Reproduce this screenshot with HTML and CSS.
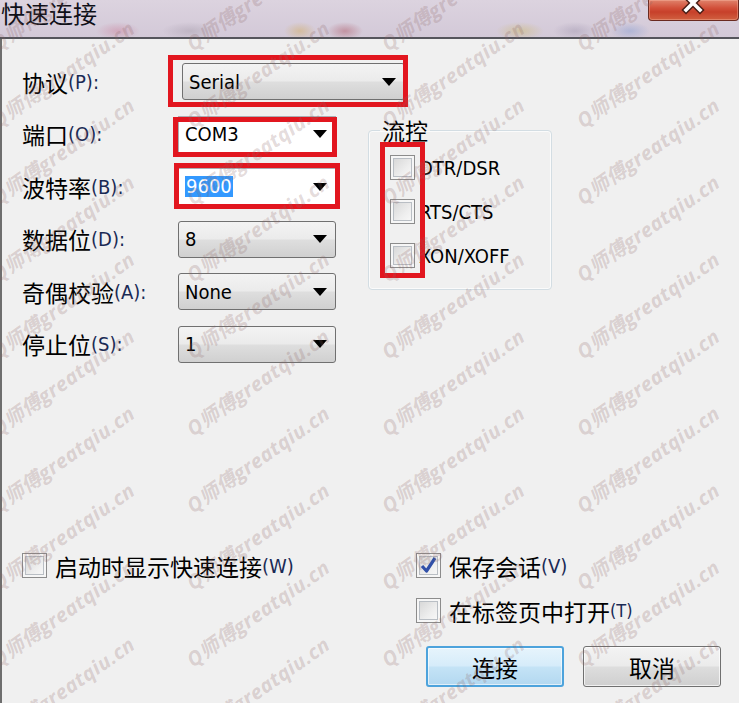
FILE: index.html
```html
<!DOCTYPE html>
<html lang="zh-CN">
<head>
<meta charset="utf-8">
<title>快速连接</title>
<link rel="stylesheet" href="styles.css">
</head>
<body>
<div class="window">
  <header class="titlebar">
    <span class="title">快速连接</span>
    <span class="close">
      <svg width="91" height="21" viewBox="0 0 91 21">
        <path d="M38 -3 L52 11 M52 -3 L38 11" stroke="#4a1e16" stroke-width="6.5" stroke-linecap="square" fill="none"/>
        <path d="M38 -3 L52 11 M52 -3 L38 11" stroke="#ffffff" stroke-width="3.6" stroke-linecap="square" fill="none"/>
      </svg>
    </span>
  </header>

  <main class="dialog">
    <div class="form">
      <div class="lbl"><span class="cj">协议</span><span class="acc">(P):</span></div>
      <div class="combo wide"><span>Serial</span><i class="arrow"></i><span class="mark m-proto"></span></div>

      <div class="lbl"><span class="cj">端口</span><span class="acc">(O):</span></div>
      <div class="combo edit"><span>COM3</span><i class="arrow"></i><span class="mark m-port"></span></div>

      <div class="lbl"><span class="cj">波特率</span><span class="acc">(B):</span></div>
      <div class="combo edit"><span class="sel">9600</span><i class="arrow"></i><span class="mark m-baud"></span></div>

      <div class="lbl"><span class="cj">数据位</span><span class="acc">(D):</span></div>
      <div class="combo"><span>8</span><i class="arrow"></i></div>

      <div class="lbl"><span class="cj">奇偶校验</span><span class="acc">(A):</span></div>
      <div class="combo"><span>None</span><i class="arrow"></i></div>

      <div class="lbl"><span class="cj">停止位</span><span class="acc">(S):</span></div>
      <div class="combo"><span>1</span><i class="arrow"></i></div>

      <fieldset class="flow">
        <legend class="cj">流控</legend>
        <div class="flow-list">
          <div class="opt tight"><span class="cb"></span><span>DTR/DSR</span></div>
          <div class="opt tight"><span class="cb"></span><span>RTS/CTS</span></div>
          <div class="opt tight"><span class="cb"></span><span>XON/XOFF</span></div>
          <span class="mark m-flow"></span>
        </div>
      </fieldset>
    </div>

    <div class="bottom">
      <div class="opt"><span class="cb"></span><span class="txt"><span class="cj">启动时显示快速连接</span><span class="acc">(W)</span></span></div>
      <div class="right">
        <div class="opt"><span class="cb checked"><svg width="23" height="23" viewBox="0 0 23 23"><path d="M5 12 L9.5 17 L18 4" stroke="#3050a8" stroke-width="3.2" fill="none" stroke-linejoin="round"/></svg></span><span class="txt"><span class="cj">保存会话</span><span class="acc">(V)</span></span></div>
        <div class="opt"><span class="cb"></span><span class="txt"><span class="cj">在标签页中打开</span><span class="acc small">(T)</span></span></div>
        <div class="btns">
          <span class="btn default cj">连接</span>
          <span class="btn cj">取消</span>
        </div>
      </div>
    </div>
  </main>

  <div class="watermark" aria-hidden="true">
    <span>Q师傅greatqiu.cn</span><span>Q师傅greatqiu.cn</span><span>Q师傅greatqiu.cn</span><span>Q师傅greatqiu.cn</span>
    <span>Q师傅greatqiu.cn</span><span>Q师傅greatqiu.cn</span><span>Q师傅greatqiu.cn</span><span>Q师傅greatqiu.cn</span>
    <span>Q师傅greatqiu.cn</span><span>Q师傅greatqiu.cn</span><span>Q师傅greatqiu.cn</span><span>Q师傅greatqiu.cn</span>
    <span>Q师傅greatqiu.cn</span><span>Q师傅greatqiu.cn</span><span>Q师傅greatqiu.cn</span><span>Q师傅greatqiu.cn</span>
    <span>Q师傅greatqiu.cn</span><span>Q师傅greatqiu.cn</span><span>Q师傅greatqiu.cn</span><span>Q师傅greatqiu.cn</span>
    <span>Q师傅greatqiu.cn</span><span>Q师傅greatqiu.cn</span><span>Q师傅greatqiu.cn</span><span>Q师傅greatqiu.cn</span>
    <span>Q师傅greatqiu.cn</span><span>Q师傅greatqiu.cn</span><span>Q师傅greatqiu.cn</span><span>Q师傅greatqiu.cn</span>
    <span>Q师傅greatqiu.cn</span><span>Q师傅greatqiu.cn</span><span>Q师傅greatqiu.cn</span><span>Q师傅greatqiu.cn</span>
    <span>Q师傅greatqiu.cn</span><span>Q师傅greatqiu.cn</span><span>Q师傅greatqiu.cn</span><span>Q师傅greatqiu.cn</span>
    <span>Q师傅greatqiu.cn</span><span>Q师傅greatqiu.cn</span><span>Q师傅greatqiu.cn</span><span>Q师傅greatqiu.cn</span>
    <span>Q师傅greatqiu.cn</span><span>Q师傅greatqiu.cn</span><span>Q师傅greatqiu.cn</span><span>Q师傅greatqiu.cn</span>
    <span>Q师傅greatqiu.cn</span><span>Q师傅greatqiu.cn</span><span>Q师傅greatqiu.cn</span><span>Q师傅greatqiu.cn</span>
  </div>
</div>
</body>
</html>
```

FILE: styles.css
```css
* { box-sizing: border-box; }

html, body { margin: 0; padding: 0; }

body {
  width: 739px;
  height: 703px;
  overflow: hidden;
  background: #f0f0f0;
  color: #000;
  font-family: "DejaVu Sans Condensed", "DejaVu Sans", "Noto Sans CJK SC", sans-serif;
  font-size: 20px;
}

.window {
  position: relative;
  width: 739px;
  height: 703px;
  overflow: hidden;
  display: flex;
  flex-direction: column;
}

/* ---------- title bar ---------- */
.titlebar {
  flex: none;
  height: 39px;
  display: flex;
  justify-content: space-between;
  align-items: flex-start;
  border-bottom: 2px solid #55555c;
  background:
    radial-gradient(ellipse 22px 9px at 118px 31px, rgba(205, 140, 165, 0.55), transparent),
    radial-gradient(ellipse 28px 9px at 190px 31px, rgba(165, 155, 170, 0.45), transparent),
    radial-gradient(ellipse 16px 9px at 300px 31px, rgba(210, 175, 110, 0.55), transparent),
    radial-gradient(ellipse 18px 9px at 345px 31px, rgba(170, 80, 95, 0.45), transparent),
    radial-gradient(ellipse 24px 9px at 520px 31px, rgba(205, 185, 110, 0.5), transparent),
    radial-gradient(ellipse 22px 9px at 575px 31px, rgba(160, 150, 175, 0.45), transparent),
    radial-gradient(ellipse 20px 9px at 630px 31px, rgba(140, 160, 210, 0.5), transparent),
    linear-gradient(#dcd3df, #d3c9d8);
}

.title {
  font-family: "Noto Sans CJK SC", sans-serif;
  font-size: 24px;
  line-height: 26px;
  padding-left: 1px;
  color: #101018;
}

.close {
  width: 91px;
  height: 21px;
  display: block;
  border: 1px solid #6a2a20;
  border-top: none;
  border-radius: 0 0 4px 4px;
  background: linear-gradient(#e0826b, #d2503a 40%, #c7402a 60%, #d06040);
  box-shadow: inset 0 0 0 1px rgba(255, 200, 180, 0.35);
  overflow: hidden;
}
.close svg { display: block; margin: -1px 0 0 -1px; }

/* ---------- dialog ---------- */
.dialog {
  flex: 1;
  display: flex;
  flex-direction: column;
  border-left: 2px solid #6e6e6e;
  padding: 24px 17px 16px 20px;
}

.cj {
  font-family: "Noto Sans CJK SC", sans-serif;
  font-size: 23px;
  line-height: 26px;
}

.acc {
  color: #1a2a55;
  font-size: 20px;
}

.txt {
  display: flex;
  align-items: center;
}

.form {
  display: grid;
  grid-template-columns: 156px 158px 32px 184px;
  grid-template-rows: repeat(6, 37px);
  row-gap: 15.5px;
}

.lbl {
  grid-column: 1;
  display: flex;
  align-items: center;
  white-space: nowrap;
}

.combo {
  position: relative;
  grid-column: 2;
  height: 37px;
  display: flex;
  align-items: center;
  justify-content: space-between;
  padding: 0 8px 0 6px;
  border: 1px solid #707070;
  border-radius: 3px;
  background: linear-gradient(#f3f3f3, #ebebeb 48%, #dedede 52%, #d0d0d0);
  white-space: nowrap;
}

.combo.wide {
  grid-column: 2 / 5;
  width: 223px;
  margin-left: 4px;
}

.combo.edit {
  background: #ffffff;
  border-color: #abadb3;
  border-radius: 0;
}

.arrow {
  display: block;
  width: 0;
  height: 0;
  border-left: 7px solid transparent;
  border-right: 7px solid transparent;
  border-top: 8px solid #000;
}

.sel {
  background: #3399ff;
  color: #fff;
  line-height: 21px;
  padding: 0 1px;
}

/* red annotation frames */
.mark {
  position: absolute;
  border: 5px solid #e2161f;
  pointer-events: none;
}
.m-proto { top: -9px; bottom: -8px; left: -15px; right: -4px; }
.m-port  { top: 0;    bottom: -5px; left: -6px;  right: -2px; }
.m-baud  { top: -6px; bottom: -5px; left: -5px;  right: -5px; }
.m-flow  { top: -13px; left: -10px; width: 45px; height: 136px; }

/* flow-control group */
.flow {
  grid-column: 4;
  grid-row: 2 / 7;
  align-self: start;
  margin: 2.5px 0 0 0;
  padding: 13px 0 21px 21px;
  border: 1px solid #d3dde3;
  border-radius: 4px;
  box-shadow: inset 0 0 0 1px #fbfbfb;
  min-width: 0;
}

.flow legend {
  padding: 0 2px;
  margin-left: -10px;
  line-height: 24px;
}

.flow-list {
  position: relative;
  display: flex;
  flex-direction: column;
  gap: 19px;
}

/* options */
.opt {
  display: flex;
  align-items: center;
  gap: 8px;
  height: 25px;
  white-space: nowrap;
}
.opt.tight { gap: 4px; }

.cb {
  flex: none;
  width: 25px;
  height: 25px;
  border: 1px solid #8c8c8c;
  background: linear-gradient(135deg, #d2d2d2, #eeeeee 60%, #fbfbfb);
  box-shadow: inset 0 0 0 2px #f6f6f6, inset 0 0 0 3px #b9bec4;
}
.cb svg { display: block; margin: 0; }

.acc.small { font-size: 18px; }

/* bottom area */
.bottom {
  margin-top: auto;
  display: grid;
  grid-template-columns: 394px auto;
  align-items: start;
}

.right {
  display: flex;
  flex-direction: column;
}
.right .opt + .opt { margin-top: 20px; }

.btns {
  display: flex;
  gap: 19px;
  margin: 23px 0 0 10px;
}

.btn {
  width: 138px;
  height: 41px;
  display: flex;
  align-items: center;
  justify-content: center;
  border: 1px solid #707070;
  border-radius: 3px;
  background: linear-gradient(#f3f3f3, #ebebeb 48%, #dddddd 52%, #cfcfcf);
  box-shadow: inset 0 0 0 1px rgba(255, 255, 255, 0.7);
}

.btn.default {
  border: 2px solid #4da3dc;
  background: linear-gradient(#e6f4fc, #d6ecfa 48%, #c4e3f6 52%, #b3d8f0);
  box-shadow: inset 0 0 0 1px rgba(255, 255, 255, 0.6);
}

/* watermark overlay */
.watermark {
  position: absolute;
  left: -2px;
  top: -97px;
  width: 780px;
  height: 924px;
  display: grid;
  grid-template-columns: repeat(4, 195px);
  grid-auto-rows: 77px;
  pointer-events: none;
  z-index: 5;
}

.watermark span {
  align-self: end;
  display: block;
  white-space: nowrap;
  font-family: "Open Sans", "Noto Sans CJK SC", sans-serif;
  font-weight: 700;
  font-style: italic;
  font-size: 20px;
  line-height: 24px;
  letter-spacing: 0.5px;
  color: rgba(140, 100, 100, 0.24);
  transform: rotate(-35deg);
  transform-origin: 0 80%;
}
```
